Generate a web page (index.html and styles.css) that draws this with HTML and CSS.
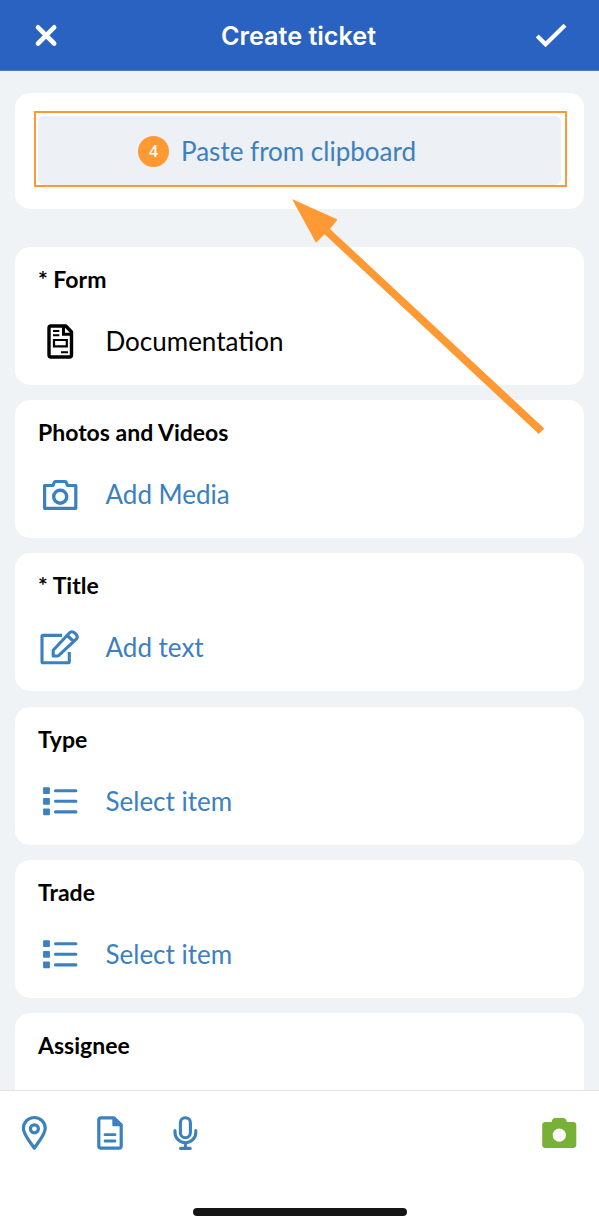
FILE: index.html
```html
<!DOCTYPE html>
<html lang="en">
<head>
<meta charset="utf-8">
<title>Create ticket</title>
<link rel="stylesheet" href="styles.css">
</head>
<body>
<div class="screen">
  <header class="header">
    <svg class="header-icon" viewBox="26 16 40 40"><path d="M38 27.3 54.2 43.5M54.2 27.3 38 43.5" fill="none" stroke="#fff" stroke-width="4.6" stroke-linecap="round"/></svg>
    <h1 class="header-title">Create ticket</h1>
    <svg class="header-icon" viewBox="531 16 40 40"><path d="M537.2 35.9 545.6 44.2 565 25.2" fill="none" stroke="#fff" stroke-width="4.2"/></svg>
  </header>
  <main class="content">
    <section class="card paste-card">
      <div class="highlight">
        <button class="paste-button"><span class="step">4</span><span class="paste-text">Paste from clipboard</span></button>
      </div>
    </section>
    <section class="card">
      <h2 class="label">* Form</h2>
      <div class="row row-dark">
        <svg class="icon" viewBox="40 321 40 40" fill="none" stroke="#000"><path d="M51 326H65.8L71.5 332V355Q71.5 357 69.5 357H51Q49 357 49 355V328Q49 326 51 326Z" stroke-width="3.4" stroke-linejoin="round"/><path d="M63.5 327V334.3H71" stroke-width="3"/><path d="M53 331H59.3M53 335.2H59.3M61 352.2H68" stroke-width="2"/><path d="M54 340H66.8V346.3H54Z" stroke-width="2.2"/></svg>
        <span class="value">Documentation</span>
      </div>
    </section>
    <section class="card">
      <h2 class="label">Photos and Videos</h2>
      <div class="row">
        <svg class="icon" viewBox="40 474 40 40" fill="none" stroke="#3b80bf" stroke-width="3.2" stroke-linejoin="round"><path d="M44.6 485.5H53L54.2 482.5Q54.5 481.5 55.5 481.5H65Q66 481.5 66.3 482.5L67.5 485.5H75.8V508.3H44.6Z"/><circle cx="60.2" cy="496.7" r="6.5" stroke-width="3.4"/></svg>
        <span class="value">Add Media</span>
      </div>
    </section>
    <section class="card">
      <h2 class="label">* Title</h2>
      <div class="row">
        <svg class="icon" viewBox="40 628 40 40" fill="none" stroke="#3b80bf" stroke-width="3.1" stroke-linejoin="round"><path d="M62 636.4H43Q42 636.4 42 637.4V662.7Q42 663.7 43 663.7H68Q69.3 663.7 69.3 662.4V653"/><path d="M53.2 657V651.2L69.1 634.3Q71.8 631.3 74.8 634.1L75.9 635.2Q78.8 638 75.7 640.7L59.1 656.2Q58 657 57 657ZM67.2 636.5 73.7 642.5"/></svg>
        <span class="value">Add text</span>
      </div>
    </section>
    <section class="card">
      <h2 class="label">Type</h2>
      <div class="row">
        <svg class="icon" viewBox="40 781 40 40" fill="#3b80bf"><rect x="43.1" y="787.3" width="6.8" height="6.8" rx=".8"/><rect x="43.1" y="797.9" width="6.8" height="6.8" rx=".8"/><rect x="43.1" y="808.5" width="6.8" height="6.8" rx=".8"/><path d="M55.5 790.7H75.9M55.5 801.3H75.9M55.5 811.9H75.9" stroke="#3b80bf" stroke-width="3.1" stroke-linecap="round"/></svg>
        <span class="value">Select item</span>
      </div>
    </section>
    <section class="card">
      <h2 class="label">Trade</h2>
      <div class="row">
        <svg class="icon" viewBox="40 781 40 40" fill="#3b80bf"><rect x="43.1" y="787.3" width="6.8" height="6.8" rx=".8"/><rect x="43.1" y="797.9" width="6.8" height="6.8" rx=".8"/><rect x="43.1" y="808.5" width="6.8" height="6.8" rx=".8"/><path d="M55.5 790.7H75.9M55.5 801.3H75.9M55.5 811.9H75.9" stroke="#3b80bf" stroke-width="3.1" stroke-linecap="round"/></svg>
        <span class="value">Select item</span>
      </div>
    </section>
    <section class="card">
      <h2 class="label">Assignee</h2>
    </section>
  </main>
  <footer class="toolbar">
    <div class="tools">
      <svg class="tool" viewBox="14 1113 40 40" fill="none" stroke="#3b80bf" stroke-width="3.2"><path d="M34.3 1148.2C31 1143 23.4 1134.7 23.4 1128.5A10.9 11 0 0 1 45.2 1128.5C45.2 1134.7 37.5 1143 34.3 1148.2Z" stroke-linejoin="round"/><circle cx="34.4" cy="1128.8" r="4"/></svg>
      <svg class="tool" viewBox="90 1113 40 40" fill="none" stroke="#3b80bf" stroke-width="3.2" stroke-linejoin="round"><path d="M101 1117.8H114L121.2 1124.8V1146Q121.2 1148.2 119 1148.2H101Q98.8 1148.2 98.8 1146V1120Q98.8 1117.8 101 1117.8Z"/><path d="M113.5 1118V1125H121Z" fill="#3b80bf" stroke-width="2.4"/><path d="M105 1134.7H115M105 1141H115" stroke-width="2.8" stroke-linecap="round"/></svg>
      <svg class="tool" viewBox="165 1113 40 40" fill="none" stroke="#3b80bf" stroke-width="3.1" stroke-linecap="round"><rect x="180.4" y="1117.7" width="10" height="20" rx="5"/><path d="M175 1130.5V1132.5A10.4 10.2 0 0 0 195.8 1132.5V1130.5M185.4 1143V1148M180.6 1148.4H190.2"/></svg>
      <svg class="tool tool-camera" viewBox="539 1113 40 40"><path d="M545.5 1122H551.5L552.3 1119.8Q553 1118 555 1118H563.5Q565.5 1118 566.2 1119.8L567 1122H573Q576.3 1122 576.3 1125.3V1144.7Q576.3 1148 573 1148H545.5Q542.2 1148 542.2 1144.7V1125.3Q542.2 1122 545.5 1122Z" fill="#77b135"/><circle cx="559.3" cy="1135.2" r="6.6" fill="#fff"/></svg>
    </div>
    <div class="home-indicator"></div>
  </footer>
  <svg class="arrow" viewBox="0 0 599 1228"><path d="M292 199 337.5 219.5 330 229 544.3 428.5 538.8 434 324.5 234.2 316 242.7Z" fill="#ff9933"/></svg>
</div>
</body>
</html>
```
FILE: styles.css
```css
* { box-sizing: border-box; }
body { margin: 0; font-family: Lato, sans-serif; }
.screen {
  position: relative;
  display: flex;
  flex-direction: column;
  width: 599px;
  height: 1228px;
  overflow: hidden;
  background: #eff3f6;
}
.header {
  flex: none;
  display: flex;
  align-items: center;
  justify-content: space-between;
  height: 71px;
  padding: 1px 28px 0 26px;
  background: #2962c0;
  border-bottom: 1px solid #4b7bc9;
}
.header-icon { width: 40px; height: 40px; }
.header-title {
  margin: 1px 0 0;
  font: 600 25.2px/32px Inter, sans-serif;
  color: #fff;
}
.content {
  flex: 1;
  min-height: 0;
  overflow: hidden;
  display: flex;
  flex-direction: column;
  gap: 15.33px;
  padding: 22.3px 15px 0;
}
.card {
  flex: none;
  height: 138px;
  padding: 17px 23px 0;
  background: #fff;
  border-radius: 15px;
}
.paste-card { height: 115.7px; padding: 17.7px 17px 0 19px; margin-bottom: 22.5px; }
.highlight {
  height: 76px;
  padding: 3px 4px 0 2px;
  border: 2px solid #ff9933;
}
.paste-button {
  display: flex;
  align-items: center;
  width: 100%;
  height: 69px;
  padding: 3px 0 0 100px;
  gap: 12px;
  border: 0;
  border-radius: 6px;
  background: #edf0f5;
  color: #3b80bf;
  font: 26px/32px Lato, sans-serif;
}
.paste-text { margin-top: -2px; }
.step {
  width: 31px;
  height: 31px;
  border-radius: 50%;
  background: #ff9933;
  color: #fff;
  font: 600 16px/30px "Open Sans", sans-serif;
  text-align: center;
}
.label { margin: 0; font-size: 23px; font-weight: 700; line-height: 30px; color: #000; }
.row {
  display: flex;
  align-items: center;
  gap: 25.5px;
  height: 40px;
  margin: 27px 0 0 2px;
  color: #3b80bf;
}
.row-dark { color: #000; }
.icon, .tool { flex: none; width: 40px; height: 40px; }
.value { font-size: 26px; line-height: 32px; }
.toolbar {
  flex: none;
  display: flex;
  flex-direction: column;
  align-items: center;
  justify-content: space-between;
  height: 138px;
  padding: 22px 0 12px;
  background: #fff;
  border-top: 1px solid #e3e6e8;
}
.tools { display: flex; gap: 35.5px; width: 100%; padding: 0 20px 0 14px; }
.tool-camera { margin-left: auto; }
.home-indicator { width: 214px; height: 8px; border-radius: 4px; background: #151515; }
.arrow { position: absolute; inset: 0; width: 599px; height: 1228px; pointer-events: none; }
```
